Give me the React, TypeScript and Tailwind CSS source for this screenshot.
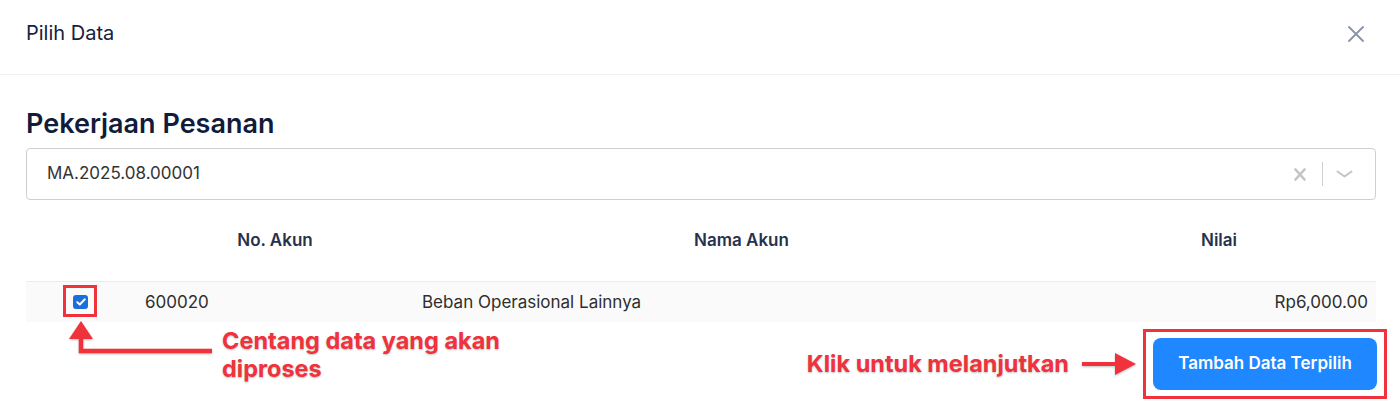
import { useState } from 'react'

// Dialog "Pilih Data" — pilih baris akun lalu tambah ke form
// Anotasi merah hanya penanda panduan (bukan bagian dari komponen asli)

const rows = [
  { noAkun: '600020', namaAkun: 'Beban Operasional Lainnya', nilai: 'Rp6,000.00' },
]

const annot = 'text-[23.5px] leading-[28px] font-bold text-[#f0323c] [text-shadow:0_1px_2px_rgba(0,0,0,0.25)]'

function CheckBox({ checked, onClick }: { checked: boolean; onClick: () => void }) {
  return (
    <button
      onClick={onClick}
      className={`w-[15px] h-[14px] rounded-[3px] flex items-center justify-center ${checked ? 'bg-[#1b6fdc]' : 'bg-white border border-gray-400'}`}
    >
      {checked && (
        <svg width="10" height="8" viewBox="0 0 10 8" fill="none">
          <path d="M1.3 4.2 L3.8 6.5 L8.7 1.4" stroke="white" strokeWidth="2" strokeLinecap="round" strokeLinejoin="round" />
        </svg>
      )}
    </button>
  )
}

export default function App() {
  const [selected, setSelected] = useState<boolean[]>(rows.map(() => true))

  const toggle = (i: number) => setSelected(prev => prev.map((s, idx) => idx === i ? !s : s))

  return (
    <div className="w-[1400px] h-[411px] bg-white overflow-hidden font-['Inter',sans-serif]">
      {/* header */}
      <div className="h-[75px] border-b border-[#f0f1f3] pl-[26px] pr-[36px] pt-[21px] flex items-start justify-between">
        <span className="text-[20px] leading-6 text-[#18213d]">Pilih Data</span>
        <button className="mt-[5px]">
          <svg width="16" height="16" viewBox="0 0 16 16" fill="none">
            <path d="M1 1 L15 15 M15 1 L1 15" stroke="#8a93a8" strokeWidth="1.8" strokeLinecap="round" />
          </svg>
        </button>
      </div>

      <div className="pl-[26px] pr-[24px] pt-[33px]">
        <h2 className="text-[27px] leading-8 font-semibold text-[#111b3b] mb-[8px]">Pekerjaan Pesanan</h2>

        {/* select */}
        <div className="h-[52px] border border-[#cfcfcf] rounded-[4px] flex items-center pl-[20px]">
          <span className="flex-1 text-[17px] text-[#333333]">MA.2025.08.00001</span>
          <div className="flex items-center">
            <svg width="12" height="13" viewBox="0 0 12 13" fill="none" className="mr-[16px]">
              <path d="M1.5 1.5 L10.5 11.5 M10.5 1.5 L1.5 11.5" stroke="#c4c4c4" strokeWidth="2.6" strokeLinecap="round" />
            </svg>
            <div className="w-px h-[24px] bg-[#d0d0d0]" />
            <svg width="17" height="8" viewBox="0 0 17 8" fill="none" className="ml-[13px] mr-[22px]">
              <path d="M1.5 1.5 L8.5 6.5 L15.5 1.5" stroke="#c4c4c4" strokeWidth="2" strokeLinecap="round" strokeLinejoin="round" />
            </svg>
          </div>
        </div>

        {/* table header */}
        <div className="grid grid-cols-[103px_292px_1fr_314px] pt-[28px] pb-[29px] text-[17px] leading-6 font-semibold text-[#27314d]">
          <div />
          <div className="text-center">No. Akun</div>
          <div className="text-center">Nama Akun</div>
          <div className="text-center">Nilai</div>
        </div>

        {rows.map((r, i) => (
          <div key={r.noAkun} className="grid grid-cols-[103px_292px_1fr_314px] border-t border-[#ececec] bg-[#fafafa] py-2 text-[17px] leading-6 text-[#2e2e2e]">
            <div className="pl-[47px] flex items-center">
              <div className="relative">
                <CheckBox checked={selected[i]} onClick={() => toggle(i)} />
                <div className="absolute -left-[10px] -right-[9px] -top-[10px] -bottom-[8px] border-[3px] border-[#f0323c] pointer-events-none" />
              </div>
            </div>
            <div className="pl-[16px]">{r.noAkun}</div>
            <div className="pl-px">{r.namaAkun}</div>
            <div className="text-right pr-[8px]">{r.nilai}</div>
          </div>
        ))}
      </div>

      {/* footer + anotasi */}
      <div className="relative pt-[16px] pb-[21px] pr-[23px] flex items-center justify-end">
        <svg width="146" height="38" viewBox="0 0 146 38" fill="none" className="absolute left-[68px] -top-[2px] drop-shadow-[0_1px_1px_rgba(0,0,0,0.25)]">
          <polygon points="13,1 1,19 25,19" fill="#f0323c" />
          <path d="M13 18 V31 H144" stroke="#f0323c" strokeWidth="4.5" />
        </svg>
        <div className={`absolute left-[222px] top-[5px] ${annot}`}>
          Centang data yang akan
          <br />
          diproses
        </div>

        <span className={annot}>Klik untuk melanjutkan</span>
        <svg width="56" height="24" viewBox="0 0 56 24" fill="none" className="ml-[12px] mr-[16px] drop-shadow-[0_1px_1px_rgba(0,0,0,0.25)]">
          <path d="M1 12 H38" stroke="#f0323c" strokeWidth="4" />
          <polygon points="34,1 55,12 34,23" fill="#f0323c" />
        </svg>
        <div className="relative">
          <button className="w-[224px] h-[52px] rounded-[8px] bg-[#1f87ff] text-white text-[17px] font-semibold">
            Tambah Data Terpilih
          </button>
          <div className="absolute -left-[10px] -right-[10px] -top-[9px] -bottom-[9px] border-[3px] border-[#f0323c] pointer-events-none" />
        </div>
      </div>
    </div>
  )
}
